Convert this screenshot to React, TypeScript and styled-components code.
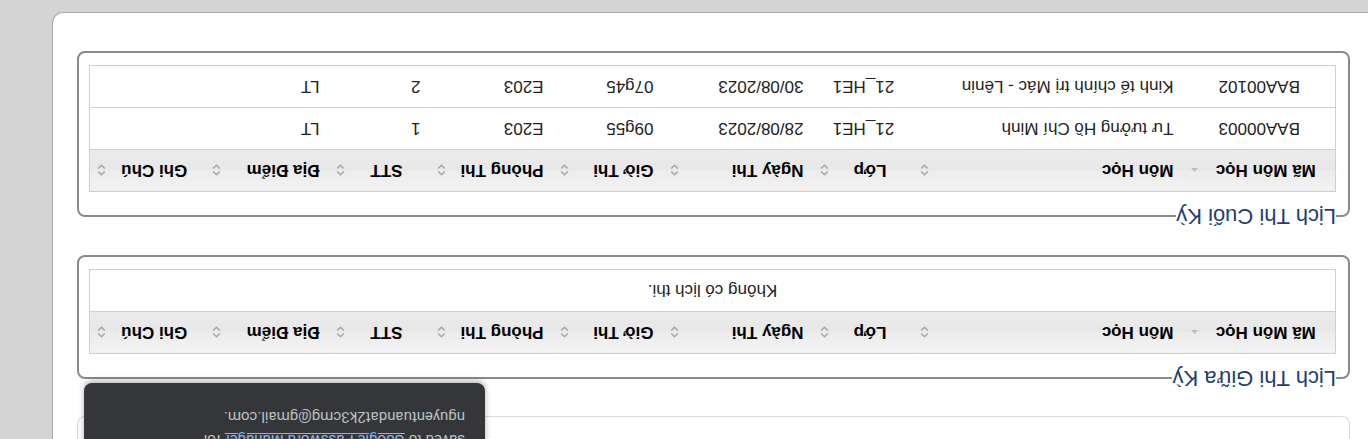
import React from 'react';
import styled, { createGlobalStyle } from 'styled-components';

type Align = 'left' | 'center';

type Column = {
  label: string;
  width: number;
  thAlign: Align;
  tdAlign: Align;
  sorted?: boolean;
};

const columns: Column[] = [
  { label: 'Mã Môn Học', width: 152, thAlign: 'center', tdAlign: 'center', sorted: true },
  { label: 'Môn Học', width: 270, thAlign: 'left', tdAlign: 'left' },
  { label: 'Lớp', width: 100, thAlign: 'center', tdAlign: 'center' },
  { label: 'Ngày Thi', width: 150, thAlign: 'left', tdAlign: 'left' },
  { label: 'Giờ Thi', width: 110, thAlign: 'left', tdAlign: 'left' },
  { label: 'Phòng Thi', width: 123, thAlign: 'left', tdAlign: 'left' },
  { label: 'STT', width: 101, thAlign: 'center', tdAlign: 'left' },
  { label: 'Địa Điểm', width: 124, thAlign: 'left', tdAlign: 'left' },
  { label: 'Ghi Chú', width: 116, thAlign: 'center', tdAlign: 'left' },
];

const finalExams = [
  ['BAA00003', 'Tư tưởng Hồ Chí Minh', '21_HE1', '28/08/2023', '09g55', 'E203', '1', 'LT', ''],
  ['BAA00102', 'Kinh tế chính trị Mác - Lênin', '21_HE1', '30/08/2023', '07g45', 'E203', '2', 'LT', ''],
];

const SortBoth = () => (
  <svg width="9" height="14" viewBox="0 0 9 14">
    <path d="M1.2 5.5 L4.5 2.2 L7.8 5.5 M1.2 8.5 L4.5 11.8 L7.8 8.5" fill="none" stroke="#a6a6a6" strokeWidth="1.5" />
  </svg>
);

const SortAsc = () => (
  <svg width="9" height="14" viewBox="0 0 9 14">
    <path d="M1 9 L4.5 5 L8 9 Z" fill="#bdbdbd" />
  </svg>
);

const ExamTable = ({ rows }: { rows: string[][] }) => (
  <Table>
    <colgroup>
      {columns.map(c => (
        <col key={c.label} style={{ width: c.width }} />
      ))}
    </colgroup>
    <thead>
      <tr>
        {columns.map(c => (
          <Th key={c.label}>
            <ThInner>
              <ThLabel $align={c.thAlign}>{c.label}</ThLabel>
              {c.sorted ? <SortAsc /> : <SortBoth />}
            </ThInner>
          </Th>
        ))}
      </tr>
    </thead>
    <tbody>
      {rows.length === 0 ? (
        <tr>
          <Td colSpan={columns.length} $align="center">
            Không có lịch thi.
          </Td>
        </tr>
      ) : (
        rows.map(row => (
          <tr key={row[0]}>
            {row.map((cell, i) => (
              <Td key={i} $align={columns[i].tdAlign}>
                {cell}
              </Td>
            ))}
          </tr>
        ))
      )}
    </tbody>
  </Table>
);

export default function App() {
  return (
    <>
      <GlobalStyle />
      <Screen>
        <Panel>
          <PrevCard />
          <Section>
            <Legend>Lịch Thi Giữa Kỳ</Legend>
            <ExamTable rows={[]} />
          </Section>
          <Section>
            <Legend>Lịch Thi Cuối Kỳ</Legend>
            <ExamTable rows={finalExams} />
          </Section>
        </Panel>
        <Toast>
          <ToastLine>Password saved. You can view your passwords</ToastLine>
          <ToastLine>
            saved to <ToastLink>Google Password Manager</ToastLink> for
          </ToastLine>
          <ToastLine>nguyentuandat2k3cmg@gmail.com.</ToastLine>
        </Toast>
      </Screen>
    </>
  );
}

const GlobalStyle = createGlobalStyle`
  html, body {
    margin: 0;
    padding: 0;
    background: #d4d4d4;
    overflow: hidden;
  }
  body {
    font-family: "Liberation Sans", Arial, sans-serif;
  }
`;

const Screen = styled.div`
  position: relative;
  width: 1368px;
  height: 439px;
  overflow: hidden;
  background: #d4d4d4;
  transform: rotate(180deg);
`;

const Panel = styled.div`
  box-sizing: border-box;
  width: 1316px;
  height: 427px;
  padding: 0 24px 12px 18px;
  background: #fff;
  border-right: 1px solid #a9a9a9;
  border-bottom: 1px solid #a9a9a9;
  border-bottom-right-radius: 11px;
  display: flex;
  flex-direction: column;
`;

const PrevCard = styled.div`
  height: 22px;
  flex: none;
  margin-bottom: 25px;
  border: 1px solid #dadada;
  border-top: none;
  border-radius: 0 0 8px 8px;
`;

const Section = styled.fieldset`
  flex: none;
  margin: 0 0 26px;
  min-width: 0;
  padding: 12px 11px 12px 12px;
  border: 2px solid #8a8a8a;
  border-radius: 8px;
`;

const Legend = styled.legend`
  padding: 0;
  font-size: 22px;
  line-height: 25px;
  color: #1f3f6f;
`;

const Table = styled.table`
  width: 1246px;
  table-layout: fixed;
  border-collapse: collapse;
  border: 1px solid #cfcfcf;
  font-size: 17px;
`;

const Th = styled.th`
  height: 41px;
  padding: 0 7px 0 10px;
  background: linear-gradient(#f2f2f2 0%, #ececec 48%, #e7e7e7 52%, #ebebeb 100%);
  border-bottom: 1px solid #cfcfcf;
  color: #000;
  font-weight: bold;
`;

const ThInner = styled.div`
  display: flex;
  align-items: center;
`;

const ThLabel = styled.span<{ $align: Align }>`
  flex: 1;
  margin-right: 7px;
  text-align: ${p => p.$align};
  white-space: nowrap;
`;

const Td = styled.td<{ $align: Align }>`
  height: 41px;
  padding: 0 10px;
  border-top: 1px solid #cfcfcf;
  color: #222;
  text-align: ${p => p.$align};
  white-space: nowrap;
`;

const Toast = styled.div`
  position: absolute;
  top: -58px;
  left: 883px;
  box-sizing: border-box;
  width: 401px;
  height: 114px;
  padding: 0 20px 22px;
  display: flex;
  flex-direction: column;
  justify-content: flex-end;
  background: #35363a;
  border-radius: 8px;
  box-shadow: 0 2px 6px rgba(0, 0, 0, 0.3);
  font-family: Roboto, "Liberation Sans", sans-serif;
  font-size: 15px;
  line-height: 23px;
  color: #bdc1c6;
`;

const ToastLine = styled.div`
  white-space: nowrap;
`;

const ToastLink = styled.span`
  color: #8ab4f8;
  text-decoration: underline;
`;
